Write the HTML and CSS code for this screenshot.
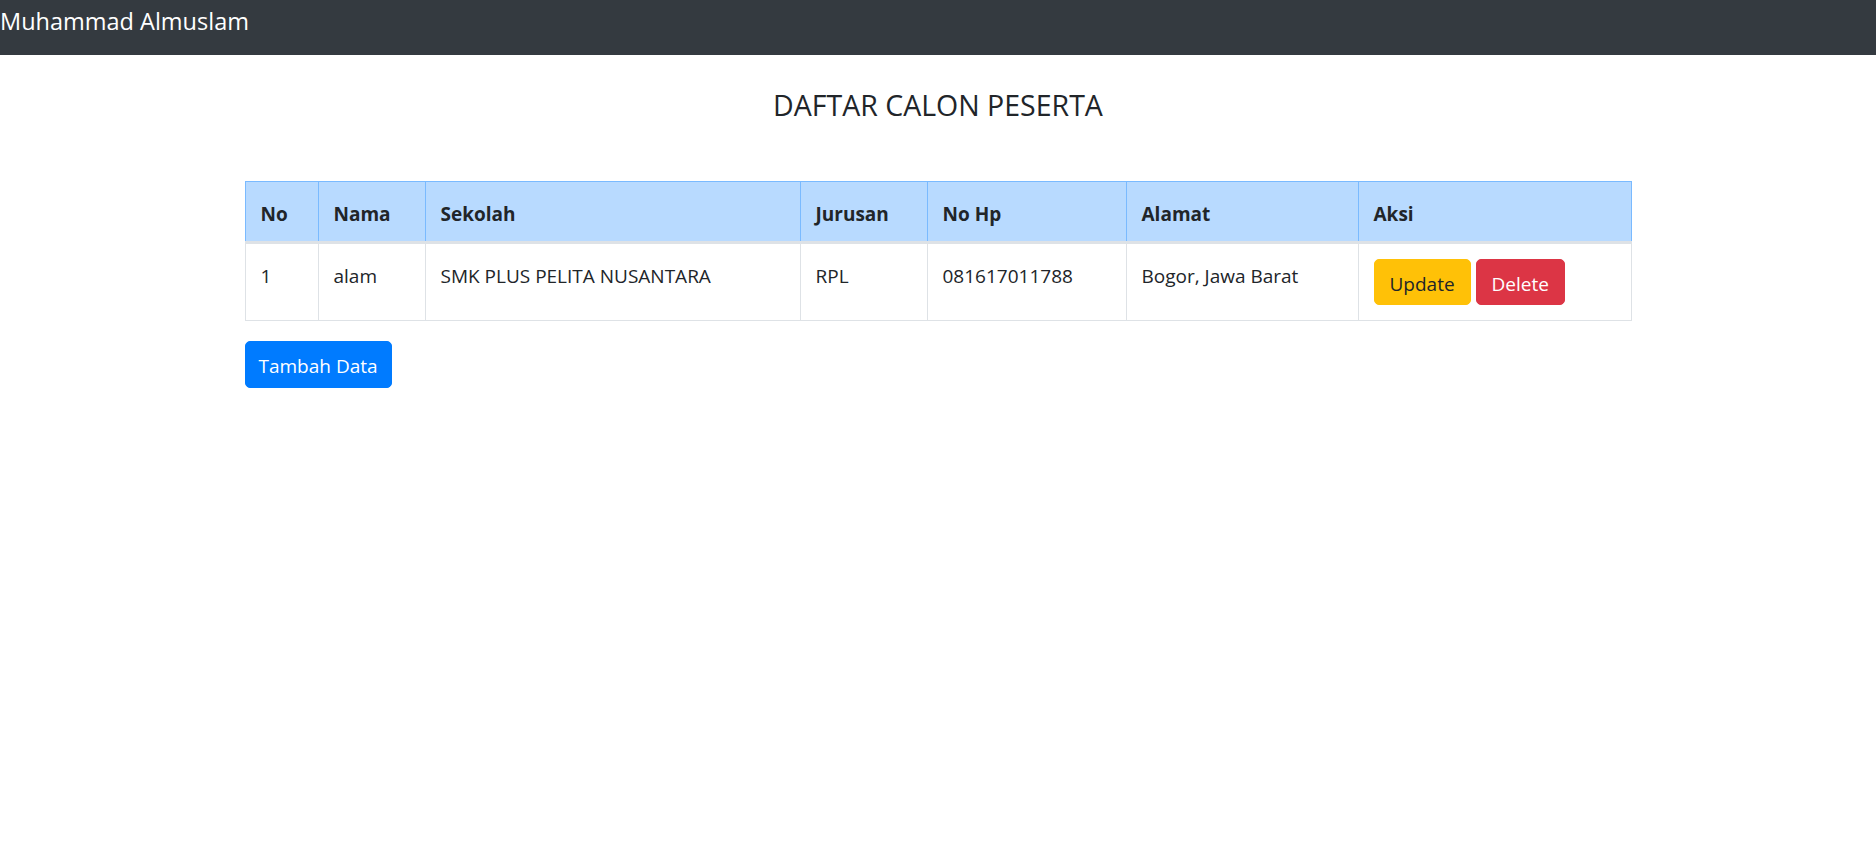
FILE: index.html
```html
<!DOCTYPE html>
<html lang="id">
<head>
<meta charset="utf-8">
<title>Daftar Calon Peserta</title>
<link rel="stylesheet" href="styles.css">
</head>
<body>
<nav class="navbar">
  <span class="brand">Muhammad Almuslam</span>
</nav>
<main class="container">
  <h4 class="title">DAFTAR CALON PESERTA</h4>
  <table class="data">
    <colgroup>
      <col class="c-no"><col class="c-nama"><col class="c-sekolah"><col class="c-jurusan"><col class="c-hp"><col class="c-alamat"><col class="c-aksi">
    </colgroup>
    <thead>
      <tr>
        <th>No</th><th>Nama</th><th>Sekolah</th><th>Jurusan</th><th>No Hp</th><th>Alamat</th><th>Aksi</th>
      </tr>
    </thead>
    <tbody>
      <tr>
        <td>1</td><td>alam</td><td>SMK PLUS PELITA NUSANTARA</td><td>RPL</td><td>081617011788</td><td>Bogor, Jawa Barat</td>
        <td><a class="btn btn-warning">Update</a> <a class="btn btn-danger">Delete</a></td>
      </tr>
    </tbody>
  </table>
  <a class="btn btn-primary">Tambah Data</a>
</main>
</body>
</html>
```

FILE: styles.css
```css
* { box-sizing: border-box; }
body {
  margin: 0;
  font-family: "Open Sans", "Noto Sans", sans-serif;
  font-size: 19px;
  line-height: 1.5;
  color: #212529;
  background: #fff;
}
.navbar {
  background: #343a40;
  height: 55px;
  display: flex;
  align-items: center;
}
.brand {
  color: #fff;
  font-size: 23.5px;
  line-height: 1.5;
  padding-bottom: 12px;
}
.container {
  width: 1425px;
  margin: 0 auto;
  padding: 0 19px;
}
.title {
  margin: 33px 0 0;
  font-size: 28.5px;
  font-weight: 400;
  line-height: 1.2;
  text-align: center;
  height: 93px;
}
.data {
  width: 100%;
  border-collapse: collapse;
  table-layout: fixed;
  margin-bottom: 20px;
}
.c-no { width: 73px; }
.c-nama { width: 107px; }
.c-sekolah { width: 375px; }
.c-jurusan { width: 127px; }
.c-hp { width: 199px; }
.c-alamat { width: 232px; }
.data th, .data td {
  padding: 18px 15px 12px;
  text-align: left;
  vertical-align: top;
  border: 1px solid #dee2e6;
  white-space: nowrap;
}
.data td:last-child { padding-top: 15px; padding-bottom: 15px; }
.data thead th {
  background: #b8daff;
  border-color: #7abaff;
  border-bottom: 3px solid #dee2e6;
  font-weight: 700;
}
.btn {
  display: inline-block;
  padding: 10px 15px 6px;
  font-size: 19px;
  line-height: 1.5;
  border: 1px solid transparent;
  border-radius: 5px;
  cursor: pointer;
}
.btn-warning { background: #ffc107; border-color: #ffc107; color: #212529; }
.btn-danger { background: #dc3545; border-color: #dc3545; color: #fff; }
.btn-primary { background: #007bff; border-color: #007bff; color: #fff; padding-left: 13px; padding-right: 13px; }
```
